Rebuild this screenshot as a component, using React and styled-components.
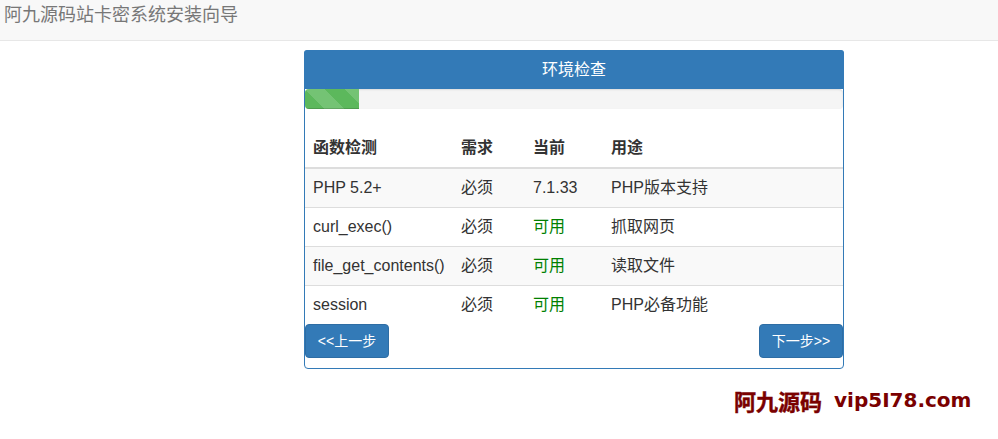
import styled, { createGlobalStyle } from "styled-components"

const rows = [
  { name: "PHP 5.2+", need: "必须", current: "7.1.33", use: "PHP版本支持" },
  { name: "curl_exec()", need: "必须", current: "可用", ok: true, use: "抓取网页" },
  { name: "file_get_contents()", need: "必须", current: "可用", ok: true, use: "读取文件" },
  { name: "session", need: "必须", current: "可用", ok: true, use: "PHP必备功能" },
]

export default function App() {
  return (
    <Page>
      <GlobalStyle />
      <Navbar>阿九源码站卡密系统安装向导</Navbar>
      <Panel>
        <PanelHeading>环境检查</PanelHeading>
        <Progress>
          <ProgressBar />
        </Progress>
        <Table>
          <colgroup>
            <col width="148" />
            <col width="72" />
            <col width="78" />
            <col />
          </colgroup>
          <thead>
            <tr>
              <Th>函数检测</Th>
              <Th>需求</Th>
              <Th>当前</Th>
              <Th>用途</Th>
            </tr>
          </thead>
          <tbody>
            {rows.map((r) => (
              <Row key={r.name}>
                <Td>{r.name}</Td>
                <Td>{r.need}</Td>
                <Td $ok={r.ok}>{r.current}</Td>
                <Td>{r.use}</Td>
              </Row>
            ))}
          </tbody>
        </Table>
        <Actions>
          <Button>&lt;&lt;上一步</Button>
          <Button>下一步&gt;&gt;</Button>
        </Actions>
      </Panel>
      <Watermark>
        <WatermarkCn>阿九源码</WatermarkCn>
        <WatermarkEn>vip5I78.com</WatermarkEn>
      </Watermark>
    </Page>
  )
}

const GlobalStyle = createGlobalStyle`
  * {
    box-sizing: border-box;
  }
  body {
    margin: 0;
    background: #fff;
    color: #333;
    font-family: "Liberation Sans", "Noto Sans CJK SC", sans-serif;
    font-size: 14px;
  }
`
const Page = styled.div`
  position: relative;
  height: 439px;
  overflow: hidden;
`
const Navbar = styled.div`
  height: 41px;
  padding: 5px 4px 0;
  background: #f8f8f8;
  border-bottom: 1px solid #e7e7e7;
  color: #777;
  font-size: 18px;
  line-height: 20px;
`
const Panel = styled.div`
  width: 540px;
  margin: 9px 0 0 304px;
  background: #fff;
  border: 1px solid #337ab7;
  border-radius: 4px;
  padding-bottom: 10px;
`
const PanelHeading = styled.div`
  margin: -1px -1px 0;
  width: 540px;
  height: 39px;
  background: #337ab7;
  border-radius: 3px 3px 0 0;
  color: #fff;
  font-size: 16px;
  line-height: 39px;
  text-align: center;
`
const Progress = styled.div`
  height: 20px;
  margin-bottom: 20px;
  background: #f5f5f5;
  border-radius: 4px;
  overflow: hidden;
  box-shadow: inset 0 1px 2px rgba(0, 0, 0, 0.1);
`
const ProgressBar = styled.div`
  width: 10%;
  height: 100%;
  background-color: #5cb85c;
  background-image: linear-gradient(
    45deg,
    rgba(255, 255, 255, 0.15) 25%,
    transparent 25%,
    transparent 50%,
    rgba(255, 255, 255, 0.15) 50%,
    rgba(255, 255, 255, 0.15) 75%,
    transparent 75%,
    transparent
  );
  background-size: 40px 40px;
  box-shadow: inset 0 -1px 0 rgba(0, 0, 0, 0.15);
`
const Table = styled.table`
  width: 100%;
  border-collapse: collapse;
  table-layout: fixed;
  font-size: 16px;
  line-height: 22px;
`
const Th = styled.th`
  padding: 8px;
  text-align: left;
  font-weight: bold;
  border-bottom: 2px solid #ddd;
`
const Row = styled.tr`
  &:nth-child(odd) {
    background: #f9f9f9;
  }
  & + & td {
    border-top: 1px solid #ddd;
  }
`
const Td = styled.td`
  padding: 8px;
  color: ${(p) => (p.$ok ? "green" : "#333")};
`
const Actions = styled.div`
  display: flex;
  justify-content: space-between;
`
const Button = styled.button`
  width: 84px;
  height: 34px;
  padding: 0;
  background: #337ab7;
  border: 1px solid #2e6da4;
  border-radius: 4px;
  color: #fff;
  font-family: inherit;
  font-size: 14px;
  line-height: 20px;
  cursor: pointer;
`
const Watermark = styled.div`
  position: absolute;
  left: 734px;
  top: 386px;
  display: flex;
  align-items: center;
  gap: 12px;
  color: #7a0000;
  font-weight: bold;
  line-height: 28px;
  white-space: nowrap;
`
const WatermarkCn = styled.span`
  font-size: 22px;
  font-family: "Noto Sans CJK SC", sans-serif;
  -webkit-text-stroke: 0.4px #7a0000;
`
const WatermarkEn = styled.span`
  font-size: 20px;
  font-family: "DejaVu Sans", sans-serif;
`
